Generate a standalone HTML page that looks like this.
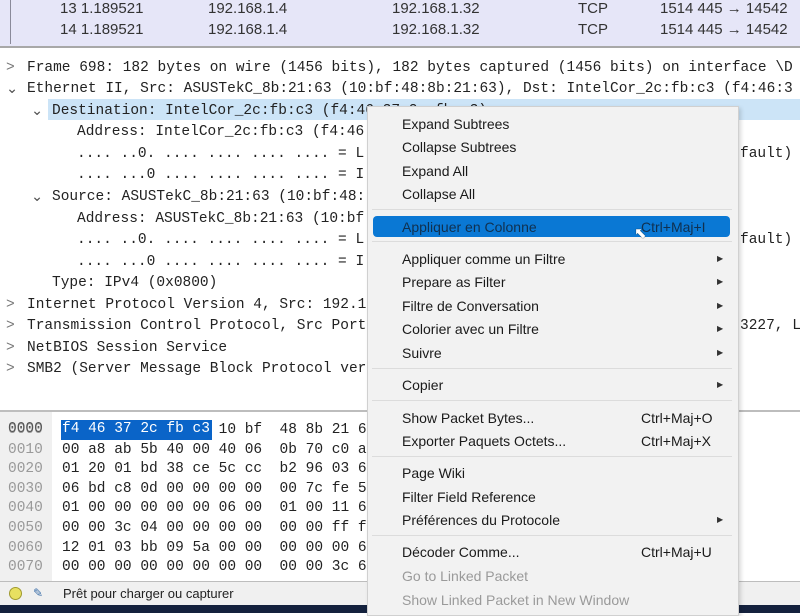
<!DOCTYPE html>
<html><head><meta charset="utf-8"><style>
*{margin:0;padding:0;box-sizing:border-box}
body{width:800px;height:613px;overflow:hidden;background:#fff;position:relative;font-family:"Liberation Sans",sans-serif}
.a{position:absolute;white-space:pre}
.m{font-family:"Liberation Mono",monospace;font-size:14.5px;color:#222}
.pl{font-size:15px;color:#333}
.mi{position:absolute;left:34px;font-size:14px;color:#1a1a1a;white-space:pre;line-height:18px}
.sc{position:absolute;left:273px;font-size:14px;color:#1a1a1a;line-height:18px}
.ar{position:absolute;left:349px;font-size:8px;color:#333;line-height:18px}
.sep{position:absolute;left:4px;right:6px;height:1px;background:#dcdcdc}
.dis{color:#9a9a9a}
</style></head><body>
<!-- packet list -->
<div class="a" style="left:0;top:0;width:800px;height:46px;background:#e6e6f8"></div>
<div class="a" style="left:10px;top:0;width:1px;height:44px;background:#8a8a9a"></div>
<div class="a" style="left:0;top:46px;width:800px;height:2px;background:#a8a8a8"></div>
<div class="a pl" style="left:60px;top:0px">13 1.189521</div>
<div class="a pl" style="left:208px;top:0px">192.168.1.4</div>
<div class="a pl" style="left:392px;top:0px">192.168.1.32</div>
<div class="a pl" style="left:578px;top:0px">TCP</div>
<div class="a pl" style="left:660px;top:0px">1514 445 → 14542</div>
<div class="a pl" style="left:60px;top:21px">14 1.189521</div>
<div class="a pl" style="left:208px;top:21px">192.168.1.4</div>
<div class="a pl" style="left:392px;top:21px">192.168.1.32</div>
<div class="a pl" style="left:578px;top:21px">TCP</div>
<div class="a pl" style="left:660px;top:21px">1514 445 → 14542</div>
<!-- details -->
<div class="a" style="left:48px;top:99px;width:752px;height:21px;background:#cce4f7"></div>
<div class="a m" style="left:6px;top:60px;color:#777">&gt;</div>
<div class="a m" style="left:27px;top:60px">Frame 698: 182 bytes on wire (1456 bits), 182 bytes captured (1456 bits) on interface \D</div>
<div class="a m" style="left:6px;top:81px;color:#555">⌄</div>
<div class="a m" style="left:27px;top:81px">Ethernet II, Src: ASUSTekC_8b:21:63 (10:bf:48:8b:21:63), Dst: IntelCor_2c:fb:c3 (f4:46:3</div>
<div class="a m" style="left:31px;top:103px;color:#555">⌄</div>
<div class="a m" style="left:52px;top:103px">Destination: IntelCor_2c:fb:c3 (f4:46:37:2c:fb:c3)</div>
<div class="a m" style="left:77px;top:124px">Address: IntelCor_2c:fb:c3 (f4:46</div>
<div class="a m" style="left:77px;top:146px">.... ..0. .... .... .... .... = L</div>
<div class="a m" style="left:77px;top:167px">.... ...0 .... .... .... .... = I</div>
<div class="a m" style="left:740px;top:146px">fault)</div>
<div class="a m" style="left:31px;top:189px;color:#555">⌄</div>
<div class="a m" style="left:52px;top:189px">Source: ASUSTekC_8b:21:63 (10:bf:48:</div>
<div class="a m" style="left:77px;top:211px">Address: ASUSTekC_8b:21:63 (10:bf</div>
<div class="a m" style="left:77px;top:232px">.... ..0. .... .... .... .... = L</div>
<div class="a m" style="left:77px;top:254px">.... ...0 .... .... .... .... = I</div>
<div class="a m" style="left:740px;top:232px">fault)</div>
<div class="a m" style="left:52px;top:275px">Type: IPv4 (0x0800)</div>
<div class="a m" style="left:6px;top:297px;color:#777">&gt;</div>
<div class="a m" style="left:27px;top:297px">Internet Protocol Version 4, Src: 192.1</div>
<div class="a m" style="left:6px;top:318px;color:#777">&gt;</div>
<div class="a m" style="left:27px;top:318px">Transmission Control Protocol, Src Port</div>
<div class="a m" style="left:740px;top:318px">3227, L</div>
<div class="a m" style="left:6px;top:340px;color:#777">&gt;</div>
<div class="a m" style="left:27px;top:340px">NetBIOS Session Service</div>
<div class="a m" style="left:6px;top:361px;color:#777">&gt;</div>
<div class="a m" style="left:27px;top:361px">SMB2 (Server Message Block Protocol ver</div>
<!-- hex -->
<div class="a" style="left:0;top:410px;width:800px;height:2px;background:#bdbdbd"></div>
<div class="a" style="left:0;top:412px;width:52px;height:170px;background:#f0f0f0"></div>
<div class="a" style="left:61px;top:420px;width:151px;height:20px;background:#0a64c8"></div>
<div class="a m" style="left:8px;top:421px;line-height:19.6px;color:#999">0000
0010
0020
0030
0040
0050
0060
0070</div>
<div class="a m" style="left:8px;top:421px;color:#555">0000</div>
<div class="a m" style="left:62px;top:421px;line-height:19.6px">                  10 bf  48 8b 21 6
00 a8 ab 5b 40 00 40 06  0b 70 c0 a
01 20 01 bd 38 ce 5c cc  b2 96 03 6
06 bd c8 0d 00 00 00 00  00 7c fe 5
01 00 00 00 00 00 06 00  01 00 11 6
00 00 3c 04 00 00 00 00  00 00 ff f
12 01 03 bb 09 5a 00 00  00 00 00 6
00 00 00 00 00 00 00 00  00 00 3c 6</div>
<div class="a m" style="left:62px;top:421px;color:#fff">f4 46 37 2c fb c3</div>
<div class="a" style="left:0;top:581px;width:800px;height:1px;background:#bdbdbd"></div>
<div class="a" style="left:0;top:582px;width:800px;height:23px;background:#f0f0f0"></div>
<div class="a" style="left:9px;top:587px;width:13px;height:13px;border-radius:50%;background:#e8e060;border:1px solid #a09a30"></div>
<div class="a" style="left:33px;top:586px;font-size:12px;color:#3a6ea8">✎</div>
<div class="a" style="left:63px;top:586px;font-size:13px;color:#222">Prêt pour charger ou capturer</div>
<div class="a" style="left:0;top:605px;width:800px;height:8px;background:#14213d"></div>
<!-- menu -->
<div class="a" style="left:367px;top:106px;width:372px;height:510px;background:#f2f2f2;border:1px solid #d0d0d0;box-shadow:2px 2px 4px rgba(0,0,0,.15)">
<div class="a" style="left:5px;top:109px;width:357px;height:21px;background:#0a78d4;border-radius:4px"></div>
<div class="mi" style="top:8px">Expand Subtrees</div>
<div class="mi" style="top:31px">Collapse Subtrees</div>
<div class="mi" style="top:55px">Expand All</div>
<div class="mi" style="top:78px">Collapse All</div>
<div class="sep" style="top:102px"></div>
<div class="mi" style="top:111px;color:#10304f">Appliquer en Colonne</div>
<div class="sc" style="top:111px;color:#10304f">Ctrl+Maj+I</div>
<div class="a" style="left:266px;top:117px;font-size:15px;color:#fff;text-shadow:0 0 1px #000">⬉</div>
<div class="sep" style="top:134px"></div>
<div class="mi" style="top:143px">Appliquer comme un Filtre</div><div class="ar" style="top:143px">▶</div>
<div class="mi" style="top:166px">Prepare as Filter</div><div class="ar" style="top:166px">▶</div>
<div class="mi" style="top:190px">Filtre de Conversation</div><div class="ar" style="top:190px">▶</div>
<div class="mi" style="top:213px">Colorier avec un Filtre</div><div class="ar" style="top:213px">▶</div>
<div class="mi" style="top:237px">Suivre</div><div class="ar" style="top:237px">▶</div>
<div class="sep" style="top:261px"></div>
<div class="mi" style="top:269px">Copier</div><div class="ar" style="top:269px">▶</div>
<div class="sep" style="top:293px"></div>
<div class="mi" style="top:302px">Show Packet Bytes...</div><div class="sc" style="top:302px">Ctrl+Maj+O</div>
<div class="mi" style="top:325px">Exporter Paquets Octets...</div><div class="sc" style="top:325px">Ctrl+Maj+X</div>
<div class="sep" style="top:349px"></div>
<div class="mi" style="top:357px">Page Wiki</div>
<div class="mi" style="top:381px">Filter Field Reference</div>
<div class="mi" style="top:404px">Préférences du Protocole</div><div class="ar" style="top:404px">▶</div>
<div class="sep" style="top:428px"></div>
<div class="mi" style="top:436px">Décoder Comme...</div><div class="sc" style="top:436px">Ctrl+Maj+U</div>
<div class="mi dis" style="top:460px">Go to Linked Packet</div>
<div class="mi dis" style="top:484px">Show Linked Packet in New Window</div>
</div>
</body></html>
